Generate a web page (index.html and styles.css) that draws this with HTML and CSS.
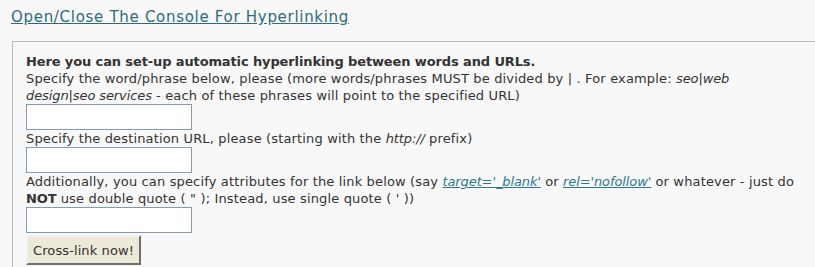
FILE: index.html
```html
<!DOCTYPE html>
<html lang="en">
<head>
  <meta charset="UTF-8">
  <title>Hyperlinking Console</title>
  <link rel="stylesheet" href="styles.css">
</head>
<body>
  <a href="#" class="toggle">Open/Close The Console For Hyperlinking</a>

  <div class="console">
    <div class="intro">Here you can set-up automatic hyperlinking between words and URLs.</div>
    <div>Specify the word/phrase below, please (more words/phrases MUST be divided by | . For example: <i>seo|web design|seo services</i> - each of these phrases will point to the specified URL)</div>
    <input type="text" class="field" id="words">
    <div>Specify the destination URL, please (starting with the <i>http://</i> prefix)</div>
    <input type="text" class="field" id="url">
    <div>Additionally, you can specify attributes for the link below (say <a href="#" class="hint">target='_blank'</a> or <a href="#" class="hint">rel='nofollow'</a> or whatever - just do <b>NOT</b> use double quote ( " ); Instead, use single quote ( ' ))</div>
    <input type="text" class="field" id="attrs">
    <button class="go">Cross-link now!</button>
  </div>
</body>
</html>
```

FILE: styles.css
```css
body {
  margin: 0;
  background: #f8f8f8;
  color: #333;
  font-family: "DejaVu Sans", Verdana, sans-serif;
  font-size: 13px;
  letter-spacing: 0.15px;
  overflow: hidden;
}
b, .intro {
  font-weight: bold;
  letter-spacing: -0.12px;
}
i, .hint {
  letter-spacing: -0.1px;
}
.toggle {
  display: inline-block;
  margin: 8px 0 0 11px;
  font-size: 15px;
  letter-spacing: 0.7px;
  color: #2b6b80;
  line-height: 18px;
}
.console {
  margin: 15px 0 0 12px;
  padding: 11px 13px 4px 13px;
  border-top: 1px solid #b4b4cc;
  border-left: 1px solid #b4b4cc;
  line-height: 17px;
}
.hint {
  color: #2b7a88;
  font-style: italic;
}
.field {
  display: block;
  box-sizing: border-box;
  width: 166px;
  height: 26px;
  margin: 0;
  border: 1px solid #7f9db9;
  background: #fff;
}
.go {
  display: block;
  margin-top: 2px;
  height: 30px;
  padding: 0 5px;
  font-family: "DejaVu Sans", Verdana, sans-serif;
  font-size: 13px;
  letter-spacing: 0.1px;
  color: #333;
  background: #ece9d8;
  border: 2px solid;
  border-color: #f4f3ee #716f64 #716f64 #f4f3ee;
}
```
